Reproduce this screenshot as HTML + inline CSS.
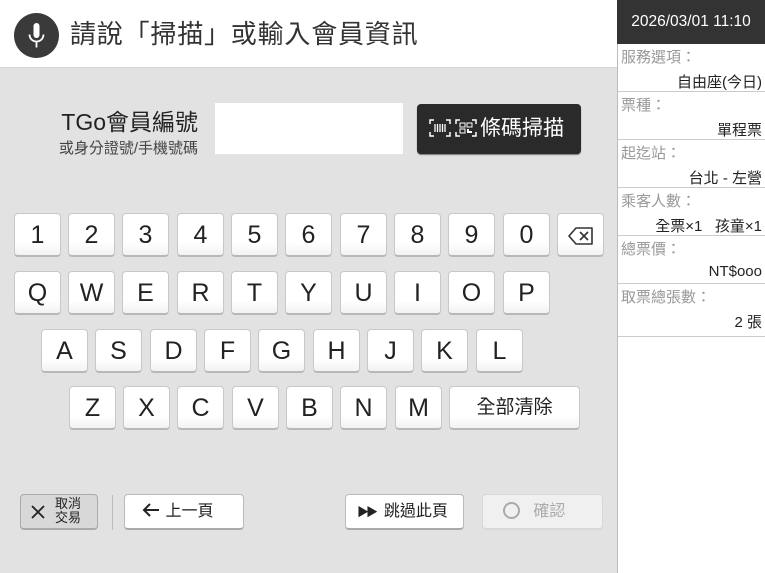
<!DOCTYPE html>
<html><head><meta charset="utf-8"><style>
*{margin:0;padding:0;box-sizing:border-box}
body{width:765px;height:573px;overflow:hidden;background:#e2e2e2;font-family:"Liberation Sans","Noto Sans CJK TC",sans-serif;color:#222;position:relative}
.a{position:absolute}
.top{left:0;top:0;width:617px;height:68px;background:#fff;border-bottom:1px solid #d6d6d6}
.k{position:absolute;width:47px;height:44px;background:linear-gradient(#fff 70%,#f2f2f2);border:1px solid #c8c8c8;border-bottom:2px solid #b8b8b8;border-radius:4px;font-size:25px;text-align:center;line-height:42px;color:#222}
.side{left:617px;top:0;width:148px;height:573px;background:#fff;border-left:1px solid #bbb}
.hd{left:617px;top:0;width:148px;height:44px;background:#333;color:#fff;font-size:15.5px;text-align:center;line-height:44px}
.row{position:absolute;left:618px;width:147px;height:48px;border-bottom:1px solid #ccc}
.lb{position:absolute;left:3px;top:2px;font-size:15px;color:#999}
.vl{position:absolute;right:3px;top:27px;font-size:15px;color:#222;white-space:nowrap}
.btn{position:absolute;height:36px;background:#fff;border:1px solid #bbb;border-bottom:2px solid #aaa;border-radius:4px;font-size:16px;line-height:33px}
</style></head><body>
<div class="a top"></div>
<div class="a" style="left:14px;top:13px;width:45px;height:45px;border-radius:50%;background:#3a3a3a"></div>
<svg class="a" style="left:14px;top:13px" width="45" height="45" viewBox="0 0 45 45"><rect x="19.5" y="10" width="6" height="15" rx="3" fill="#fff"/><path d="M15.5 21.5a7 7 0 0 0 14 0M22.5 28.5v6" stroke="#fff" stroke-width="1.8" fill="none"/></svg>
<div class="a" style="left:70px;top:14px;font-size:26px;color:#333;letter-spacing:0.8px">請說「掃描」或輸入會員資訊</div>
<div class="a" style="left:45px;top:103px;font-size:23px;color:#222;width:153px;text-align:right">TGo會員編號</div>
<div class="a" style="left:30px;top:137px;font-size:15px;color:#444;width:168px;text-align:right">或身分證號/手機號碼</div>
<div class="a" style="left:215px;top:103px;width:188px;height:51px;background:#fff"></div>
<div class="a" style="left:417px;top:104px;width:164px;height:50px;background:#2a2a2a;border-radius:4px;color:#fff;font-size:21px;line-height:49px;padding-left:12px;box-shadow:0 1px 1px #777">
<svg width="22" height="18" viewBox="0 0 22 18" style="vertical-align:-2px"><path d="M1 5V1h4M17 1h4v4M21 13v4h-4M5 17H1v-4" stroke="#fff" fill="none" stroke-width="1.5"/><path d="M6 5v8M8.5 5v8M11 5v8M13.5 5v8M16 5v8" stroke="#fff" stroke-width="1.3"/></svg><svg width="22" height="18" viewBox="0 0 22 18" style="vertical-align:-2px;margin-left:4px;margin-right:3px"><path d="M1 5V1h4M17 1h4v4M21 13v4h-4M5 17H1v-4" stroke="#fff" fill="none" stroke-width="1.5"/><rect x="5" y="4" width="5" height="4" stroke="#fff" fill="none"/><rect x="12" y="4" width="5" height="4" stroke="#fff" fill="none"/><rect x="5" y="10" width="5" height="4" stroke="#fff" fill="none"/><path d="M12 10h2v2h3v2h-5z" fill="#fff"/></svg>條碼掃描</div>

<div class="k" style="left:14px;top:213px">1</div><div class="k" style="left:68px;top:213px">2</div><div class="k" style="left:122px;top:213px">3</div><div class="k" style="left:177px;top:213px">4</div><div class="k" style="left:231px;top:213px">5</div><div class="k" style="left:285px;top:213px">6</div><div class="k" style="left:340px;top:213px">7</div><div class="k" style="left:394px;top:213px">8</div><div class="k" style="left:448px;top:213px">9</div><div class="k" style="left:503px;top:213px">0</div>
<div class="k" style="left:557px;top:213px"><svg width="26" height="20" viewBox="0 0 26 20" style="vertical-align:-3px"><path d="M8 2h16v16H8L1 10z" stroke="#333" stroke-width="1.6" fill="none" stroke-linejoin="round"/><path d="M12 6l8 8M20 6l-8 8" stroke="#333" stroke-width="1.6"/></svg></div>
<div class="k" style="left:14px;top:271px">Q</div><div class="k" style="left:68px;top:271px">W</div><div class="k" style="left:122px;top:271px">E</div><div class="k" style="left:177px;top:271px">R</div><div class="k" style="left:231px;top:271px">T</div><div class="k" style="left:285px;top:271px">Y</div><div class="k" style="left:340px;top:271px">U</div><div class="k" style="left:394px;top:271px">I</div><div class="k" style="left:448px;top:271px">O</div><div class="k" style="left:503px;top:271px">P</div>
<div class="k" style="left:41px;top:329px">A</div><div class="k" style="left:95px;top:329px">S</div><div class="k" style="left:150px;top:329px">D</div><div class="k" style="left:204px;top:329px">F</div><div class="k" style="left:258px;top:329px">G</div><div class="k" style="left:313px;top:329px">H</div><div class="k" style="left:367px;top:329px">J</div><div class="k" style="left:421px;top:329px">K</div><div class="k" style="left:476px;top:329px">L</div>
<div class="k" style="left:69px;top:386px">Z</div><div class="k" style="left:123px;top:386px">X</div><div class="k" style="left:177px;top:386px">C</div><div class="k" style="left:232px;top:386px">V</div><div class="k" style="left:286px;top:386px">B</div><div class="k" style="left:340px;top:386px">N</div><div class="k" style="left:395px;top:386px">M</div>
<div class="k" style="left:449px;top:386px;width:131px;font-size:19px">全部清除</div>

<div class="btn" style="left:20px;top:494px;width:78px;background:#d8d8d8;border-color:#aaa"><svg style="position:absolute;left:10px;top:10px" width="14" height="14" viewBox="0 0 14 14"><path d="M1 1l12 12M13 1L1 13" stroke="#222" stroke-width="1.8"/></svg><span style="position:absolute;left:34px;top:2px;font-size:13px;line-height:14px">取消<br>交易</span></div>
<div class="a" style="left:112px;top:495px;width:1px;height:35px;background:#bbb"></div>
<div class="btn" style="left:124px;top:494px;width:120px;padding-left:16px"><svg width="20" height="16" viewBox="0 0 20 16" style="vertical-align:-2px"><path d="M18 8H3M9 2L3 8l6 6" stroke="#222" stroke-width="2" fill="none"/></svg>&nbsp;上一頁</div>
<div class="btn" style="left:345px;top:494px;width:119px;padding-left:11px"><span style="font-size:12px;letter-spacing:-3px">▶▶</span>&nbsp;&nbsp;跳過此頁</div>
<div class="btn" style="left:482px;top:494px;width:121px;background:#f0f0f0;border-color:#d8d8d8;color:#aaa;padding-left:20px"><span style="display:inline-block;width:17px;height:17px;border:2px solid #aaa;border-radius:50%;vertical-align:-3px"></span>&nbsp;&nbsp;&nbsp;確認</div>

<div class="a side"></div>
<div class="a hd">2026/03/01 11:10</div>
<div class="row" style="top:44px"><span class="lb">服務選項：</span><span class="vl">自由座(今日)</span></div>
<div class="row" style="top:92px"><span class="lb">票種：</span><span class="vl">單程票</span></div>
<div class="row" style="top:140px"><span class="lb">起迄站：</span><span class="vl">台北 - 左營</span></div>
<div class="row" style="top:188px"><span class="lb">乘客人數：</span><span class="vl">全票×1&nbsp;&nbsp;&nbsp;孩童×1</span></div>
<div class="row" style="top:236px"><span class="lb">總票價：</span><span class="vl">NT$ooo</span></div>
<div class="row" style="top:284px;height:53px"><span class="lb">取票總張數：</span><span class="vl">2 張</span></div>
</body></html>
